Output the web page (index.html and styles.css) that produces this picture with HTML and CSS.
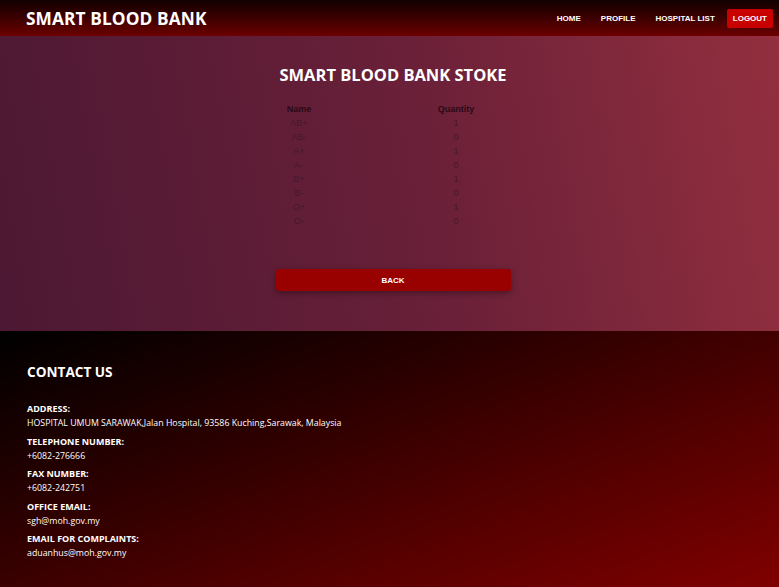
FILE: index.html
```html
<!DOCTYPE html>
<html>
<head>
<meta charset="utf-8">
<link rel="stylesheet" href="styles.css">
</head>
<body>
<header class="topbar">
  <div class="brand">SMART BLOOD BANK</div>
  <nav class="nav">
    <a class="nav-link">HOME</a>
    <a class="nav-link">PROFILE</a>
    <a class="nav-link">HOSPITAL LIST</a>
    <a class="nav-link logout">LOGOUT</a>
  </nav>
</header>
<main class="stock">
  <h1 class="stock-title">SMART BLOOD BANK STOKE</h1>
  <table class="stock-table">
    <thead><tr><th>Name</th><th>Quantity</th></tr></thead>
    <tbody>
      <tr><td>AB+</td><td>1</td></tr>
      <tr><td>AB-</td><td>0</td></tr>
      <tr><td>A+</td><td>1</td></tr>
      <tr><td>A-</td><td>0</td></tr>
      <tr><td>B+</td><td>1</td></tr>
      <tr><td>B-</td><td>0</td></tr>
      <tr><td>O+</td><td>1</td></tr>
      <tr><td>O-</td><td>0</td></tr>
    </tbody>
  </table>
  <button class="back-btn">BACK</button>
</main>
<footer class="contact">
  <h2 class="contact-title">CONTACT US</h2>
  <dl class="contact-list">
    <dt>ADDRESS:</dt>
    <dd>HOSPITAL UMUM SARAWAK,Jalan Hospital, 93586 Kuching,Sarawak, Malaysia</dd>
    <dt>TELEPHONE NUMBER:</dt>
    <dd>+6082-276666</dd>
    <dt>FAX NUMBER:</dt>
    <dd>+6082-242751</dd>
    <dt>OFFICE EMAIL:</dt>
    <dd>sgh@moh.gov.my</dd>
    <dt>EMAIL FOR COMPLAINTS:</dt>
    <dd>aduanhus@moh.gov.my</dd>
  </dl>
</footer>
</body>
</html>
```
FILE: styles.css
```css
* { box-sizing: border-box; }
html, body { margin: 0; padding: 0; }
body {
  width: 779px;
  height: 587px;
  overflow: hidden;
  font-family: "Open Sans", "Liberation Sans", sans-serif;
  background: #000;
}
.topbar {
  height: 36px;
  display: flex;
  align-items: center;
  justify-content: space-between;
  padding: 0 6px 0 26px;
  background: linear-gradient(to bottom, #120000 0%, #380000 45%, #6c0000 100%);
}
.brand {
  color: #fff;
  font-family: "Open Sans", sans-serif;
  font-weight: 700;
  font-size: 17.3px;
  letter-spacing: 0.1px;
  padding-top: 1px;
}
.nav {
  display: flex;
  align-items: center;
}
.nav-link {
  color: #fff;
  font-family: "Liberation Sans", Arial, sans-serif;
  font-weight: 700;
  font-size: 8px;
  padding: 4px 10px;
}
.nav-link.logout {
  background: #c80000;
  border-radius: 2px;
  padding: 5px 6px;
  margin-left: 2px;
}
.stock {
  height: 295px;
  display: flex;
  flex-direction: column;
  align-items: center;
  padding: 28px 0 0 7px;
  background: linear-gradient(80deg, #4c1833 0%, #6a2038 55%, #932f3f 100%);
}
.stock-title {
  margin: 0;
  color: #fff;
  font-family: "Open Sans", sans-serif;
  font-weight: 700;
  font-size: 16.5px;
  line-height: 22px;
}
.stock-table {
  margin-top: 16px;
  border-collapse: collapse;
  font-family: "Liberation Sans", Arial, sans-serif;
  font-size: 9px;
}
.stock-table th {
  font-weight: 700;
  height: 14px;
  padding: 0;
  color: #2a0a16;
  text-align: center;
}
.stock-table td {
  height: 14px;
  padding: 0;
  text-align: center;
  color: #45182a;
}
.stock-table th:first-child, .stock-table td:first-child { width: 126px; }
.stock-table th:last-child, .stock-table td:last-child { width: 188px; }
.back-btn {
  margin-top: 41px;
  width: 235px;
  height: 22px;
  border: 0;
  border-radius: 3px;
  background: #990000;
  color: #fff;
  font-family: "Liberation Sans", Arial, sans-serif;
  font-weight: 700;
  font-size: 8px;
  box-shadow: 0 2px 6px rgba(0,0,0,0.35);
}
.contact {
  height: 256px;
  padding: 32px 27px 0;
  color: #fff;
  background: linear-gradient(160deg, #000000 0%, #2a0000 35%, #800000 100%);
}
.contact-title {
  margin: 0;
  font-family: "Open Sans", sans-serif;
  font-weight: 700;
  font-size: 13.6px;
  line-height: 18px;
}
.contact-list {
  margin: 21px 0 0;
  font-family: "Open Sans", sans-serif;
  font-size: 9px;
}
.contact-list dt {
  font-weight: 700;
  line-height: 14px;
}
.contact-list dd {
  margin: 0 0 4.5px;
  line-height: 14px;
  font-size: 8.8px;
}
```
